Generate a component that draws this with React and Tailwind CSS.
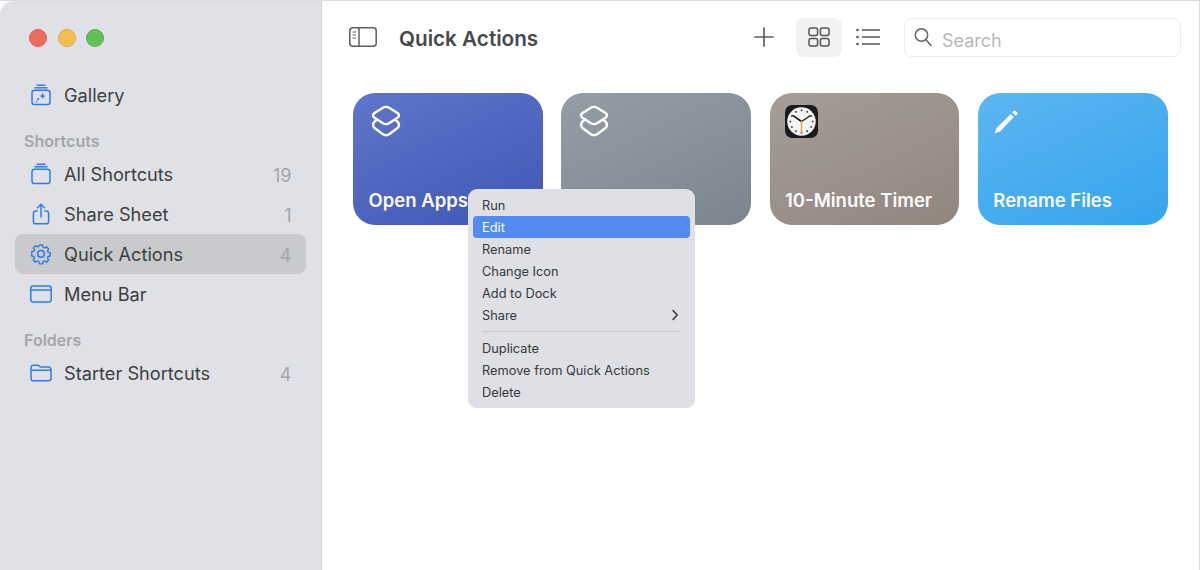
import React from "react";

const B = "#2b7de9";

function IconGallery() {
  return (
    <svg width="22" height="22" viewBox="0 0 22 22" fill="none" stroke={B} strokeWidth="1.5">
      <path d="M6.5 1.2h9" />
      <path d="M4.5 3.8h13" />
      <rect x="2" y="6.2" width="18" height="14.3" rx="2.6" />
      <path d="M12.6 8.6l.9 2.6 2.5.9-2.5.9-.9 2.6-.9-2.6-2.5-.9 2.5-.9z" fill={B} stroke="none" />
      <circle cx="8" cy="15.2" r="1.1" fill={B} stroke="none" />
      <circle cx="6.6" cy="17.6" r=".8" fill={B} stroke="none" />
    </svg>
  );
}
function IconAll() {
  return (
    <svg width="22" height="22" viewBox="0 0 22 22" fill="none" stroke={B} strokeWidth="1.5">
      <path d="M6.5 1.2h9" />
      <path d="M4.5 3.8h13" />
      <rect x="2" y="6.2" width="18" height="14.3" rx="2.6" />
    </svg>
  );
}
function IconShare() {
  return (
    <svg width="22" height="22" viewBox="0 0 22 22" fill="none" stroke={B} strokeWidth="1.5" strokeLinecap="round" strokeLinejoin="round">
      <path d="M7.2 8H6a2.6 2.6 0 0 0-2.6 2.6v7.6A2.6 2.6 0 0 0 6 20.8h10a2.6 2.6 0 0 0 2.6-2.6v-7.6A2.6 2.6 0 0 0 16 8h-1.2" />
      <path d="M11 14V1.4" />
      <path d="M7.4 4.8L11 1.2l3.6 3.6" />
    </svg>
  );
}
function IconGear() {
  return (
    <svg width="22" height="22" viewBox="0 0 22 22" fill="none" stroke={B} strokeWidth="1.5" strokeLinejoin="round">
      <path d="M9.3 2h3.4l.5 2.4 1.7.7 2.1-1.3 2.3 2.4-1.3 2 .7 1.7 2.3.5v3.4l-2.3.5-.7 1.7 1.3 2-2.3 2.4-2.1-1.3-1.7.7-.5 2.4H9.3l-.5-2.4-1.7-.7-2.1 1.3-2.3-2.4 1.3-2-.7-1.7-2.3-.5V9.2l2.3-.5.7-1.7-1.3-2 2.3-2.4 2.1 1.3 1.7-.7z" transform="translate(11 11) scale(.93) translate(-11 -11.6)" />
      <circle cx="11" cy="10.9" r="3.3" />
    </svg>
  );
}
function IconMenuBar() {
  return (
    <svg width="22" height="18" viewBox="0 0 22 18" fill="none" stroke={B} strokeWidth="1.5">
      <rect x=".8" y="1" width="20.4" height="16" rx="2.4" />
      <path d="M.8 5h20.4" />
    </svg>
  );
}
function IconFolder() {
  return (
    <svg width="22" height="18" viewBox="0 0 22 18" fill="none" stroke={B} strokeWidth="1.5" strokeLinejoin="round">
      <path d="M1 3.4A2.2 2.2 0 0 1 3.2 1.2h4.4c.8 0 1.2.3 1.7.8l1 1.1h8.5A2.2 2.2 0 0 1 21 5.3v9.3a2.2 2.2 0 0 1-2.2 2.2H3.2A2.2 2.2 0 0 1 1 14.6z" />
      <path d="M1 6.2h20" />
    </svg>
  );
}
function Layers() {
  return (
    <svg className="ml-[2px]" width="30" height="33" viewBox="0 0 30 33" fill="none" stroke="#fff" strokeWidth="2.4" strokeLinejoin="round" strokeLinecap="round">
      <path d="M11.5 3Q15 .7 18.5 3L26.5 8Q29.5 10.2 26.5 12.8L18.5 18Q15 20.3 11.5 18L3.5 12.8Q.5 10.2 3.5 8Z" />
      <path d="M5.5 15L3.5 16.6Q.6 20 3.5 23L11.5 29Q15 31.4 18.5 29L26.5 23Q29.4 20 26.5 16.6L24.5 15" />
    </svg>
  );
}
function Clock() {
  const ticks = [];
  for (let i = 0; i < 12; i++) {
    const a = (i * Math.PI) / 6;
    ticks.push(<circle key={i} cx={16 + Math.sin(a) * 10.8} cy={16 - Math.cos(a) * 10.8} r="1" fill="#555" />);
  }
  return (
    <svg width="33" height="33" viewBox="0 0 32 32">
      <rect width="32" height="32" rx="7" fill="#1b1b1d" />
      <circle cx="16" cy="16" r="13.8" fill="#f5f5f7" />
      {ticks}
      <path d="M16 16L7.8 10.4" stroke="#111" strokeWidth="1.5" strokeLinecap="round" />
      <path d="M16 16l8.4-5.6" stroke="#111" strokeWidth="1.2" strokeLinecap="round" />
      <path d="M16 15v12" stroke="#e9a13b" strokeWidth="1.3" />
    </svg>
  );
}
function Pencil() {
  return (
    <svg width="26" height="26" viewBox="0 0 26 26" fill="#fff">
      <path d="M1.6 24.4L3.6 19 17.8 5l3 3L7 22.5z" />
      <path d="M19.2 3.4l1.3-1.3a1.6 1.6 0 0 1 2.2 0l1.2 1.2a1.6 1.6 0 0 1 0 2.2L22.6 6.8z" />
    </svg>
  );
}

function Row({ icon, label, count, active }) {
  return (
    <div className={`flex h-10 items-center rounded-lg pl-[14px] pr-[14.5px] ${active ? "bg-[#c9cace]" : ""}`}>
      <span className="flex w-[23px] justify-center">{icon}</span>
      <span className="ml-[12px] pt-[2px] text-[18.2px] text-[#3d3e42]">{label}</span>
      {count && <span className="ml-auto pt-[2px] text-[18px] text-[#a3a4a9]">{count}</span>}
    </div>
  );
}

function Section({ children, className }) {
  return <div className={`pl-[9px] text-[16px] leading-5 font-semibold text-[#a5a6ab] ${className}`}>{children}</div>;
}

function Card({ grad, icon, label }) {
  return (
    <div className={`flex h-[132px] flex-col justify-between rounded-[22px] pt-[12px] pb-[12px] pl-[15.5px] ${grad}`}>
      <div className="flex h-[33px] items-center">{icon}</div>
      <div className="text-[18.5px] leading-[26px] font-semibold whitespace-nowrap text-[#fbfbfd]">{label}</div>
    </div>
  );
}

function MenuItem({ children, active, chevron }) {
  return (
    <div className={`flex h-[22px] items-center rounded-[4px] pl-[9px] pr-[11px] ${active ? "bg-[#528cf0] text-white" : "text-[#37383c]"}`}>
      <span className="pt-[2px]">{children}</span>
      {chevron && (
        <svg className="ml-auto" width="8" height="12" viewBox="0 0 8 12" fill="none" stroke="#37383c" strokeWidth="1.6" strokeLinecap="round" strokeLinejoin="round">
          <path d="M2 1.5L6.2 6 2 10.5" />
        </svg>
      )}
    </div>
  );
}

export default function App() {
  return (
    <div className="relative h-[570px] w-[1200px] overflow-hidden bg-white font-['Inter',sans-serif]">
      <div className="flex h-full w-full border-t-[1.5px] border-r-[1.5px] border-[#dcdcdc]">
        <aside className="h-full w-[322px] shrink-0 rounded-tl-[14px] border-r-[1.5px] border-[#d2d3d7] bg-[#e0e1e6] px-[15px] pt-[28px]">
          <div className="flex gap-[10.5px] pl-[14px]">
            <span className="size-[18px] rounded-full border border-[#e25d53] bg-[#ee6a5f]" />
            <span className="size-[18px] rounded-full border border-[#e0a93f] bg-[#f5bd4f]" />
            <span className="size-[18px] rounded-full border border-[#56ae47] bg-[#61c354]" />
          </div>
          <div className="mt-[28px]">
            <Row icon={<IconGallery />} label="Gallery" />
          </div>
          <Section className="mt-[16px]">Shortcuts</Section>
          <div className="mt-[3px] flex flex-col">
            <Row icon={<IconAll />} label="All Shortcuts" count="19" />
            <Row icon={<IconShare />} label="Share Sheet" count="1" />
            <Row active icon={<IconGear />} label="Quick Actions" count="4" />
            <Row icon={<IconMenuBar />} label="Menu Bar" />
          </div>
          <Section className="mt-[16px]">Folders</Section>
          <div className="mt-[3px]">
            <Row icon={<IconFolder />} label="Starter Shortcuts" count="4" />
          </div>
        </aside>
        <main className="min-w-0 flex-1 pl-[31px]">
          <header className="flex h-[75px] items-center pr-[18px] pb-[3px]">
            <div className="flex h-[40px] w-full items-center">
              <svg className="-ml-[4.5px]" width="28" height="20" viewBox="0 0 28 20" fill="none" stroke="#5d5e62" strokeWidth="1.5">
                <rect x=".8" y=".8" width="26.4" height="18.4" rx="3" />
                <path d="M10 .8v18.4" />
                <path d="M3.6 5h3.4M3.6 8h3.4M3.6 11h3.4" strokeWidth="1.1" />
              </svg>
              <h1 className="ml-[22.5px] pt-[3px] text-[20.7px] font-semibold text-[#47484b]">Quick Actions</h1>
              <svg className="ml-auto" width="22" height="22" viewBox="0 0 22 22" stroke="#5d5e62" strokeWidth="1.7" strokeLinecap="round">
                <path d="M11 2v18M2 11h18" />
              </svg>
              <div className="ml-[21px] flex h-[39px] w-[46px] items-center justify-center rounded-lg bg-[#f2f2f3]">
                <svg width="22" height="20" viewBox="0 0 22 20" fill="none" stroke="#55565a" strokeWidth="1.5">
                  <rect x="1" y="1" width="8.6" height="7.6" rx="2" />
                  <rect x="12.4" y="1" width="8.6" height="7.6" rx="2" />
                  <rect x="1" y="11.4" width="8.6" height="7.6" rx="2" />
                  <rect x="12.4" y="11.4" width="8.6" height="7.6" rx="2" />
                </svg>
              </div>
              <svg className="ml-[14px]" width="24" height="18" viewBox="0 0 24 18" stroke="#55565a" strokeWidth="1.5">
                <path d="M6 2h18M6 9h18M6 16h18" />
                <circle cx="1.5" cy="2" r="1.3" fill="#55565a" stroke="none" />
                <circle cx="1.5" cy="9" r="1.3" fill="#55565a" stroke="none" />
                <circle cx="1.5" cy="16" r="1.3" fill="#55565a" stroke="none" />
              </svg>
              <div className="ml-[24px] flex h-[39px] w-[277px] shrink-0 items-center rounded-lg border border-[#ececee] pl-[9px]">
                <svg width="18" height="20" viewBox="0 0 18 20" fill="none" stroke="#636468" strokeWidth="1.5" strokeLinecap="round">
                  <circle cx="7.5" cy="8" r="6.2" />
                  <path d="M12 12.8l5 5.6" />
                </svg>
                <span className="ml-[10px] pt-[6px] text-[18px] text-[#b7b8bb]">Search</span>
              </div>
            </div>
          </header>
          <div className="mt-[17px] grid grid-cols-4 gap-x-[18.6px] pr-[31.5px]">
            <Card grad="bg-[linear-gradient(155deg,#5f76c9,#3f57b6)]" icon={<Layers />} label="Open Apps" />
            <Card grad="bg-[linear-gradient(155deg,#959da6,#7c848e)]" icon={<Layers />} label="Morning Info" />
            <Card grad="bg-[linear-gradient(155deg,#a69d98,#92867f)]" icon={<Clock />} label="10-Minute Timer" />
            <Card grad="bg-[linear-gradient(155deg,#5db6f1,#34a4ee)]" icon={<Pencil />} label="Rename Files" />
          </div>
        </main>
      </div>
      <div className="absolute top-[189px] left-[468px] w-[227px] rounded-[9px] bg-[#dfe0e5] px-[5px] pt-[5px] pb-[5px] text-[12.8px] shadow-[0_0_1px_rgba(0,0,0,0.15)]">
        <MenuItem>Run</MenuItem>
        <MenuItem active>Edit</MenuItem>
        <MenuItem>Rename</MenuItem>
        <MenuItem>Change Icon</MenuItem>
        <MenuItem>Add to Dock</MenuItem>
        <MenuItem chevron>Share</MenuItem>
        <div className="mx-[9px] my-[5px] h-px bg-[#c8c9ce]" />
        <MenuItem>Duplicate</MenuItem>
        <MenuItem>Remove from Quick Actions</MenuItem>
        <MenuItem>Delete</MenuItem>
      </div>
    </div>
  );
}
